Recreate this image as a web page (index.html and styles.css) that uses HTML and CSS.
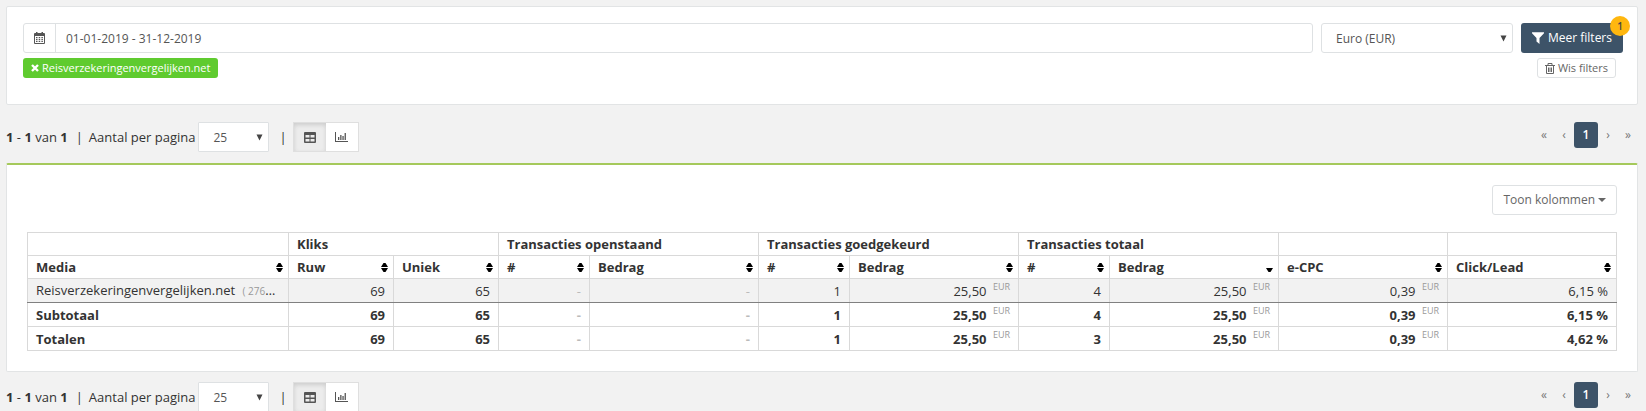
FILE: index.html
```
<!DOCTYPE html>
<html lang="nl">
<head>
<meta charset="utf-8">
<meta name="viewport" content="width=device-width, initial-scale=1">
<title>Rapportage</title>
<link rel="stylesheet" href="styles.css">
</head>
<body>
<svg class="sprite" aria-hidden="true">
  <symbol id="i-caret" viewBox="0 0 7 7"><path d="M.5 .5h6L3.500 6.500z"/></symbol>
  <symbol id="i-sort" viewBox="0 0 7 9"><path d="M0 4 2.500 0h2L7 4zM0 5h7L4.500 9h-2z"/></symbol>
  <symbol id="i-desc" viewBox="0 0 7 9"><path d="M0 5h7L4.500 9h-2z"/></symbol>
  <symbol id="i-table" viewBox="0 0 12 11"><path fill-rule="evenodd" d="M1 0h10a1 1 0 0 1 1 1v9a1 1 0 0 1-1 1H1a1 1 0 0 1-1-1V1a1 1 0 0 1 1-1zM1.500 3v2.500h4V3zM6.500 3v2.500h4V3zM1.500 7v2.500h4V7zM6.500 7v2.500h4V7z"/></symbol>
  <symbol id="i-chart" viewBox="0 0 13 11"><path d="M0 0h1v9h12v1H0zM3 5h1.300v3H3zM5.200 3h1.300v5H5.200zM7.400 4h1.300v4H7.400zM9.600 1h1.300v7H9.600z"/></symbol>
</svg>
<main class="page">
  <form class="panel filters">
    <div class="filter-row">
      <div class="date-group">
        <label class="addon" for="period" aria-label="Periode">
          <svg width="11" height="12" viewBox="0 0 11 12"><path fill-rule="evenodd" d="M2 0h1.500v1h4V0H9v1h1a1 1 0 0 1 1 1v9a1 1 0 0 1-1 1H1a1 1 0 0 1-1-1V2a1 1 0 0 1 1-1h1zM1 4v7h9V4zM2 5h1.500v1.300H2zM4.700 5h1.500v1.300H4.700zM7.400 5h1.500v1.300H7.400zM2 7h1.500v1.300H2zM4.700 7h1.500v1.300H4.700zM7.400 7h1.500v1.300H7.400zM2 9h1.500v1H2zM4.700 9h1.500v1H4.700zM7.400 9h1.500v1H7.400z"/></svg>
        </label>
        <input class="date" id="period" type="text" value="01-01-2019 - 31-12-2019">
      </div>
      <div class="select currency">
        <select aria-label="Valuta"><option>Euro (EUR)</option></select>
        <svg class="arrow"><use href="#i-caret"/></svg>
      </div>
      <button class="more" type="button">
        <svg width="12" height="12" viewBox="0 0 12 12"><path d="M0 .3h12v.9L7.500 6v6L4.500 9.500V6L0 1.200z"/></svg>
        Meer filters
        <span class="badge">1</span>
      </button>
    </div>
    <div class="tag-row">
      <button class="tag" type="button">
        <svg width="8" height="8" viewBox="0 0 8 8"><path d="M1 1l6 6M7 1L1 7" stroke="currentColor" stroke-width="2.400"/></svg>
        Reisverzekeringenvergelijken.net
      </button>
      <button class="clear" type="button">
        <svg width="10" height="11" viewBox="0 0 10 11"><path d="M0 2.500h10M3 2.500V.5h4v2M1.500 2.500v8h7v-8M3.500 4.500V9M5 4.500V9M6.500 4.500V9" fill="none" stroke="currentColor"/></svg>
        Wis filters
      </button>
    </div>
  </form>

  <div class="toolbar">
    <p class="count"><b>1</b> - <b>1</b> van <b>1</b></p>
    <span class="bar">|</span>
    <label for="size-top">Aantal per pagina</label>
    <div class="select size">
      <select id="size-top"><option>25</option></select>
      <svg class="arrow"><use href="#i-caret"/></svg>
    </div>
    <span class="bar view-bar">|</span>
    <div class="views">
      <button class="view active" type="button" aria-label="Tabel"><svg width="12" height="11"><use href="#i-table"/></svg></button>
      <button class="view" type="button" aria-label="Grafiek"><svg width="13" height="11"><use href="#i-chart"/></svg></button>
    </div>
    <nav class="pager" aria-label="Paginering">
      <a href="#first">«</a><a href="#prev">‹</a><a class="current" href="#1">1</a><a href="#next">›</a><a href="#last">»</a>
    </nav>
  </div>

  <section class="panel report">
    <button class="columns" type="button">Toon kolommen <svg width="8" height="4" viewBox="0 0 8 4"><path d="M0 0h8L4 4z"/></svg></button>
    <table class="data">
      <colgroup>
        <col class="c-media"><col class="c-click"><col class="c-click">
        <col class="c-num"><col class="c-sum"><col class="c-num"><col class="c-sum"><col class="c-num"><col class="c-sum">
        <col class="c-sum"><col class="c-sum">
      </colgroup>
      <thead>
        <tr><td></td><th colspan="2">Kliks</th><th colspan="2">Transacties openstaand</th><th colspan="2">Transacties goedgekeurd</th><th colspan="2">Transacties totaal</th><td></td><td></td></tr>
        <tr class="sorts">
          <th><button class="sort" type="button">Media<svg><use href="#i-sort"/></svg></button></th>
          <th><button class="sort" type="button">Ruw<svg><use href="#i-sort"/></svg></button></th>
          <th><button class="sort" type="button">Uniek<svg><use href="#i-sort"/></svg></button></th>
          <th><button class="sort" type="button">#<svg><use href="#i-sort"/></svg></button></th>
          <th><button class="sort" type="button">Bedrag<svg><use href="#i-sort"/></svg></button></th>
          <th><button class="sort" type="button">#<svg><use href="#i-sort"/></svg></button></th>
          <th><button class="sort" type="button">Bedrag<svg><use href="#i-sort"/></svg></button></th>
          <th><button class="sort" type="button">#<svg><use href="#i-sort"/></svg></button></th>
          <th><button class="sort" type="button">Bedrag<svg><use href="#i-desc"/></svg></button></th>
          <th><button class="sort" type="button">e-CPC<svg><use href="#i-sort"/></svg></button></th>
          <th><button class="sort" type="button">Click/Lead<svg><use href="#i-sort"/></svg></button></th>
        </tr>
      </thead>
      <tbody>
        <tr class="item"><td>Reisverzekeringenvergelijken.net <span class="ident">( 276543 )</span></td><td>69</td><td>65</td><td class="none">-</td><td class="none">-</td><td>1</td><td>25,50 <sup>EUR</sup></td><td>4</td><td>25,50 <sup>EUR</sup></td><td>0,39 <sup>EUR</sup></td><td>6,15 %</td></tr>
      </tbody>
      <tfoot>
        <tr><th>Subtotaal</th><td>69</td><td>65</td><td class="none">-</td><td class="none">-</td><td>1</td><td>25,50 <sup>EUR</sup></td><td>4</td><td>25,50 <sup>EUR</sup></td><td>0,39 <sup>EUR</sup></td><td>6,15 %</td></tr>
        <tr><th>Totalen</th><td>69</td><td>65</td><td class="none">-</td><td class="none">-</td><td>1</td><td>25,50 <sup>EUR</sup></td><td>3</td><td>25,50 <sup>EUR</sup></td><td>0,39 <sup>EUR</sup></td><td>4,62 %</td></tr>
      </tfoot>
    </table>
  </section>

  <div class="toolbar toolbar-bottom">
    <p class="count"><b>1</b> - <b>1</b> van <b>1</b></p>
    <span class="bar">|</span>
    <label for="size-bottom">Aantal per pagina</label>
    <div class="select size">
      <select id="size-bottom"><option>25</option></select>
      <svg class="arrow"><use href="#i-caret"/></svg>
    </div>
    <span class="bar view-bar">|</span>
    <div class="views">
      <button class="view active" type="button" aria-label="Tabel"><svg width="12" height="11"><use href="#i-table"/></svg></button>
      <button class="view" type="button" aria-label="Grafiek"><svg width="13" height="11"><use href="#i-chart"/></svg></button>
    </div>
    <nav class="pager" aria-label="Paginering">
      <a href="#first">«</a><a href="#prev">‹</a><a class="current" href="#1">1</a><a href="#next">›</a><a href="#last">»</a>
    </nav>
  </div>
</main>
</body>
</html>
```
FILE: styles.css
```
* {
  box-sizing: border-box;
}

body {
  margin: 0;
  overflow: hidden;
  background: #f2f2f2;
  color: #333;
  font: 13px/18px "Open Sans", "Noto Sans", sans-serif;
}

button,
input,
select {
  margin: 0;
  font: inherit;
  color: inherit;
}

svg {
  display: block;
  flex: none;
  fill: currentColor;
}

.sprite {
  position: absolute;
  width: 0;
  height: 0;
}

.page {
  padding: 6px 8px 0 6px;
}

.panel {
  background: #fff;
  border: 1px solid #e2e4e5;
  border-radius: 2px;
}

/* Filters */

.filters {
  padding: 16px 14px 26px 16px;
}

.filter-row {
  display: flex;
  gap: 8px;
  font-size: 12px;
}

.date-group {
  display: flex;
  flex: 1;
  height: 30px;
  border: 1px solid #dee1e3;
  border-radius: 3px;
}

.addon {
  display: flex;
  align-items: center;
  justify-content: center;
  width: 32px;
  border-right: 1px solid #dee1e3;
  color: #555;
}

.date {
  flex: 1;
  min-width: 0;
  padding: 2px 10px 0;
  border: 0;
  background: none;
  color: #555;
}

.select {
  display: grid;
  align-items: center;
}

.select select,
.select .arrow {
  grid-area: 1 / 1;
}

.select select {
  width: 100%;
  height: 30px;
  padding: 2px 14px 0;
  appearance: none;
  background: #fff;
  border: 1px solid #dee1e3;
  border-radius: 3px;
  color: #555;
  font-size: 12px;
}

.arrow {
  width: 7px;
  height: 7px;
  margin-right: 6px;
  justify-self: end;
  color: #444;
  pointer-events: none;
}

.currency {
  width: 192px;
}

.more {
  position: relative;
  display: flex;
  align-items: center;
  gap: 4px;
  height: 30px;
  padding: 0 11px;
  border: 0;
  border-radius: 3px;
  background: #3d5368;
  color: #fff;
}

.badge {
  position: absolute;
  top: -7px;
  right: -7px;
  width: 20px;
  border-radius: 10px;
  background: #ffb70f;
  color: #444;
  font-size: 10px;
  font-weight: 600;
  line-height: 20px;
  text-align: center;
}

.tag-row {
  display: flex;
  justify-content: space-between;
  margin-top: 5px;
  padding-right: 7px;
  font-size: 11px;
}

.tag,
.clear {
  display: flex;
  align-items: center;
  gap: 3px;
  height: 20px;
  border: 0;
  border-radius: 3px;
}

.tag {
  padding: 0 8px;
  background: #5fcb2f;
  color: #fff;
}

.clear {
  padding: 0 7px;
  border: 1px solid #dee1e3;
  background: #fff;
  color: #666;
}

/* Toolbars */

.toolbar {
  display: flex;
  align-items: center;
  padding: 17px 0 11px;
}

.toolbar-bottom {
  padding: 10px 0 0;
}

.count {
  margin: 0;
}

.bar {
  margin: 0 6px 0 8px;
}

.size {
  width: 71px;
  margin-left: 3px;
}

.size select {
  border-radius: 1px;
}

.view-bar {
  margin-left: 10px;
}

.views {
  display: flex;
  border: 1px solid #dfdfdf;
}

.view {
  display: flex;
  align-items: center;
  justify-content: center;
  width: 32px;
  height: 28px;
  padding: 0;
  border: 0;
  background: #fff;
  color: #555;
}

.view.active {
  background: #ececec;
  box-shadow: inset 0 2px 4px #ccc;
}

.pager {
  display: flex;
  align-items: center;
  align-self: flex-start;
  margin-left: auto;
  color: #777;
  font-size: 12px;
  line-height: 26px;
  text-align: center;
}

.pager a {
  width: 20px;
  color: inherit;
  text-decoration: none;
}

.pager .current {
  width: 24px;
  border-radius: 3px;
  background: #3d5368;
  color: #fff;
  font-weight: 600;
}

/* Report */

.report {
  padding: 20px 20px;
  border-top: 2px solid #a5c95b;
}

.columns {
  display: flex;
  align-items: center;
  gap: 3px;
  height: 30px;
  margin: 0 0 17px auto;
  padding: 0 10px;
  background: #fff;
  border: 1px solid #dee1e3;
  border-radius: 3px;
  color: #666;
  font-size: 12px;
}

.data {
  width: 100%;
  table-layout: fixed;
  border-collapse: collapse;
}

.c-media { width: 261px; }
.c-click { width: 105px; }
.c-num { width: 91px; }
.c-sum { width: 169px; }

.data th,
.data td {
  height: 23px;
  padding: 0 8px;
  overflow: hidden;
  border: 1px solid #d9d9d9;
  line-height: 18px;
  text-align: right;
  text-overflow: ellipsis;
  white-space: nowrap;
}

.data th,
.data td:first-child {
  text-align: left;
}

.data .sorts th {
  padding-right: 5px;
}

.sort {
  display: flex;
  align-items: center;
  justify-content: space-between;
  width: 100%;
  padding: 0;
  border: 0;
  background: none;
}

.sort svg {
  width: 7px;
  height: 9px;
  color: #000;
}

.data tbody td,
.data tfoot th,
.data tfoot td {
  height: 24px;
}

.data tfoot {
  font-weight: 700;
}

.data .item td {
  background: #f2f2f2;
  border-top-color: #808080;
  border-bottom-color: #808080;
}

.data .none {
  color: #bbb;
}

.ident {
  margin-left: 4px;
  color: #999;
  font-size: 10px;
}

.data sup {
  margin-left: 3px;
  color: #999;
  font-size: 9px;
  font-weight: 400;
  line-height: 1;
}
```
